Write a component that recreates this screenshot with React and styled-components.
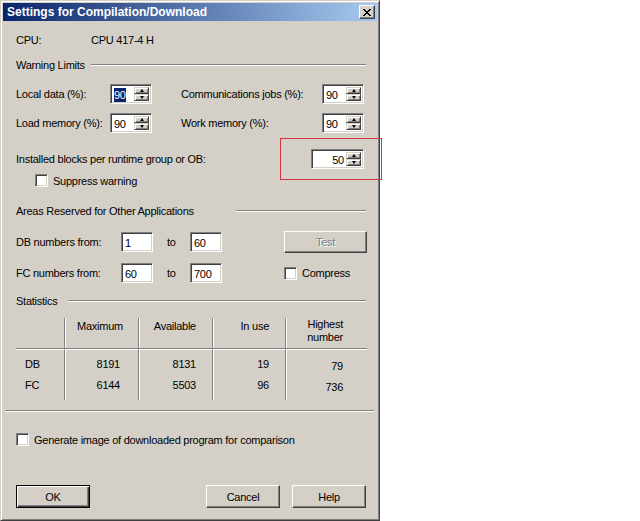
import React from 'react';
import styled, { createGlobalStyle } from 'styled-components';

const GlobalStyle = createGlobalStyle`
   body {
      margin: 0;
      background: #fff;
   }
`;

const Page = styled.div`
   position: relative;
   width: 640px;
   height: 521px;
   font-family: "Liberation Sans", Arial, sans-serif;
   font-size: 11px;
   letter-spacing: -0.25px;
   color: #000;
`;

const Window = styled.div`
   width: 380px;
   height: 521px;
   box-sizing: border-box;
   padding: 2px;
   background: #d4d0c8;
   border: 1px solid;
   border-color: #d4d0c8 #404040 #404040 #d4d0c8;
   box-shadow: inset 1px 1px #fff, inset -1px -1px #808080;
   display: flex;
   flex-direction: column;
`;

const TitleBar = styled.div`
   height: 18px;
   display: flex;
   align-items: center;
   padding: 0 2px 0 4px;
   background: linear-gradient(to right, #0a246a, #a6caf0);
`;

const Title = styled.span`
   color: #fff;
   font-weight: bold;
   font-size: 12px;
   letter-spacing: 0;
`;

const CloseButton = styled.div`
   margin-left: auto;
   width: 16px;
   height: 14px;
   box-sizing: border-box;
   display: flex;
   align-items: center;
   justify-content: center;
   background: #d4d0c8;
   border: 1px solid;
   border-color: #fff #404040 #404040 #fff;
   box-shadow: inset -1px -1px #808080;
`;

const Body = styled.div`
   flex: 1;
   padding: 0 10px 0 13px;
   line-height: 14px;
`;

const Row = styled.div`
   display: grid;
   grid-template-columns: ${p => p.$cols};
   align-items: center;
   margin-top: ${p => p.$mt}px;
   height: ${p => p.$h || 14}px;
   white-space: nowrap;
`;

const GroupTitle = styled.div`
   display: grid;
   grid-template-columns: ${p => p.$start}px 1fr;
   align-items: center;
   margin-top: ${p => p.$mt}px;
   margin-right: 1px;
   height: 14px;
`;

const Etch = styled.div`
   height: 1px;
   background: #808080;
   border-bottom: 1px solid #fff;
`;

const Separator = styled(Etch)`
   margin: 10px -7px 0 -11px;
`;

const Sunken = styled.div`
   box-sizing: border-box;
   height: 20px;
   width: ${p => p.$w}px;
   background: #fff;
   border: 1px solid;
   border-color: #808080 #fff #fff #808080;
   box-shadow: inset 1px 1px #404040, inset -1px -1px #d4d0c8;
   display: flex;
   padding: 2px;
   justify-self: ${p => p.$justify || 'start'};
`;

const FieldText = styled.div`
   flex: 1;
   line-height: 16px;
   padding: 0 2px 0 1px;
   text-align: ${p => p.$align || 'left'};
`;

const Selected = styled.span`
   background: #0a246a;
   color: #fff;
   padding: 1px 0;
`;

const SpinButtons = styled.div`
   width: 15px;
   display: flex;
   flex-direction: column;
`;

const SpinButton = styled.div`
   flex: 1;
   box-sizing: border-box;
   display: flex;
   align-items: center;
   justify-content: center;
   background: #d4d0c8;
   border: 1px solid;
   border-color: #d4d0c8 #404040 #404040 #d4d0c8;
   box-shadow: inset 1px 1px #fff, inset -1px -1px #808080;
`;

const Arrow = styled.span`
   width: 0;
   height: 0;
   border-left: 2.5px solid transparent;
   border-right: 2.5px solid transparent;
   ${p => p.$down ? 'border-top: 3px solid #000;' : 'border-bottom: 3px solid #000;'}
`;

const CheckBox = styled.span`
   display: inline-block;
   width: 13px;
   height: 13px;
   box-sizing: border-box;
   background: #fff;
   border: 1px solid;
   border-color: #808080 #fff #fff #808080;
   box-shadow: inset 1px 1px #404040, inset -1px -1px #d4d0c8;
`;

const Check = styled.label`
   display: flex;
   align-items: center;
   gap: 5px;
   margin-top: ${p => p.$mt || 0}px;
   padding-left: ${p => p.$indent || 0}px;
   height: 13px;
   white-space: nowrap;
`;

const Button = styled.div`
   width: ${p => p.$w || 74}px;
   height: ${p => p.$h || 23}px;
   box-sizing: border-box;
   display: flex;
   align-items: center;
   justify-content: center;
   background: #d4d0c8;
   border: 1px solid;
   border-color: ${p => p.$default ? '#000' : '#fff #404040 #404040 #fff'};
   box-shadow: ${p => p.$default
      ? 'inset 1px 1px #fff, inset -1px -1px #404040, inset -2px -2px #808080'
      : 'inset -1px -1px #808080'};
   color: ${p => p.$disabled ? '#808080' : '#000'};
   text-shadow: ${p => p.$disabled ? '1px 1px #fff' : 'none'};
   justify-self: end;
`;

const ButtonBar = styled.div`
   display: flex;
   gap: 12px;
   margin-top: 39px;
   padding-right: 1px;
   & > :first-child {
      margin-right: auto;
   }
`;

const StatGrid = styled.div`
   display: grid;
   grid-template-columns: 48px 74px 74px 73px 1fr;
   grid-template-rows: 31px 25px 26px;
   margin-top: 10px;
`;

const Cell = styled.div`
   box-sizing: border-box;
   padding-top: ${p => p.$pt || 0}px;
   padding-right: ${p => p.$pr || 0}px;
   padding-left: ${p => p.$pl || 0}px;
   text-align: ${p => p.$pl ? 'left' : 'right'};
   line-height: ${p => p.$lh || 14}px;
   border-left: ${p => p.$vl ? '1px solid #808080' : 'none'};
   box-shadow: ${p => p.$vl ? 'inset 1px 0 #fff' : 'none'};
   ${p => p.$head && 'border-bottom: 1px solid #808080;'}
   ${p => p.$first && 'border-top: 1px solid #fff;'}
`;

const Highlight = styled.div`
   position: absolute;
   left: 280px;
   top: 138px;
   width: 102px;
   height: 42px;
   box-sizing: border-box;
   border: 1px solid #d9333f;
   pointer-events: none;
`;

const Spin = ({ value, width = 42, align, selected, justify }) => (
   <Sunken $w={width} $justify={justify}>
      <FieldText $align={align}>{selected ? <Selected>{value}</Selected> : value}</FieldText>
      <SpinButtons>
         <SpinButton><Arrow /></SpinButton>
         <SpinButton><Arrow $down /></SpinButton>
      </SpinButtons>
   </Sunken>
);

const Field = ({ value }) => (
   <Sunken $w={32}>
      <FieldText>{value}</FieldText>
   </Sunken>
);

const stats = [
   { name: 'DB', max: 8191, avail: 8131, used: 19, high: 79, pt: 7 },
   { name: 'FC', max: 6144, avail: 5503, used: 96, high: 736, pt: 4 },
];

const App = () => {
   return (
      <Page>
         <GlobalStyle />
         <Window>
            <TitleBar>
               <Title>Settings for Compilation/Download</Title>
               <CloseButton>
                  <svg width="8" height="7" viewBox="0 0 8 7" shapeRendering="crispEdges">
                     <path d="M0 0h2v1h-2zM6 0h2v1h-2zM1 1h2v1h-2zM5 1h2v1h-2zM2 2h4v1h-4zM3 3h2v1h-2zM2 4h4v1h-4zM1 5h2v1h-2zM5 5h2v1h-2zM0 6h2v1h-2zM6 6h2v1h-2z" fill="#000" />
                  </svg>
               </CloseButton>
            </TitleBar>
            <Body>
               <Row $cols="75px auto" $mt={12}>
                  <span>CPU:</span>
                  <span>CPU 417-4 H</span>
               </Row>

               <GroupTitle $start={75} $mt={11}>
                  <span>Warning Limits</span>
                  <Etch />
               </GroupTitle>

               <Row $cols="94px 42px 29px 141px 42px" $mt={12} $h={20}>
                  <span>Local data (%):</span>
                  <Spin value="90" selected />
                  <span />
                  <span>Communications jobs (%):</span>
                  <Spin value="90" />
               </Row>
               <Row $cols="94px 42px 29px 141px 42px" $mt={9} $h={20}>
                  <span>Load memory (%):</span>
                  <Spin value="90" />
                  <span />
                  <span>Work memory (%):</span>
                  <Spin value="90" />
               </Row>

               <Row $cols="1fr 56px" $mt={16} $h={20}>
                  <span>Installed blocks per runtime group or OB:</span>
                  <Spin value="50" width={53} align="right" />
               </Row>
               <Check $mt={5} $indent={19}>
                  <CheckBox />
                  Suppress warning
               </Check>

               <GroupTitle $start={220} $mt={17}>
                  <span>Areas Reserved for Other Applications</span>
                  <Etch />
               </GroupTitle>

               <Row $cols="105px 32px 37px 32px 1fr" $mt={13} $h={20}>
                  <span>DB numbers from:</span>
                  <Field value="1" />
                  <span style={{ paddingLeft: 14 }}>to</span>
                  <Field value="60" />
                  <Button $w={83} $h={22} $disabled>Test</Button>
               </Row>
               <Row $cols="105px 32px 37px 32px 62px 1fr" $mt={12} $h={20}>
                  <span>FC numbers from:</span>
                  <Field value="60" />
                  <span style={{ paddingLeft: 14 }}>to</span>
                  <Field value="700" />
                  <span />
                  <Check>
                     <CheckBox />
                     Compress
                  </Check>
               </Row>

               <GroupTitle $start={52} $mt={11}>
                  <span>Statistics</span>
                  <Etch />
               </GroupTitle>

               <StatGrid>
                  <Cell $head />
                  <Cell $head $vl $pt={1} $pr={15}>Maximum</Cell>
                  <Cell $head $vl $pt={1} $pr={16}>Available</Cell>
                  <Cell $head $vl $pt={1} $pr={16}>In use</Cell>
                  <Cell $head $vl $pt={0} $pr={24} $lh={13}>Highest<br />number</Cell>
                  {stats.map((s, i) => (
                     <React.Fragment key={s.name}>
                        <Cell $first={i === 0} $pt={s.pt} $pl={9}>{s.name}</Cell>
                        <Cell $first={i === 0} $vl $pt={s.pt} $pr={18}>{s.max}</Cell>
                        <Cell $first={i === 0} $vl $pt={s.pt} $pr={16}>{s.avail}</Cell>
                        <Cell $first={i === 0} $vl $pt={s.pt} $pr={16}>{s.used}</Cell>
                        <Cell $first={i === 0} $vl $pt={s.pt + 2} $pr={24}>{s.high}</Cell>
                     </React.Fragment>
                  ))}
               </StatGrid>

               <Separator />

               <Check $mt={21}>
                  <CheckBox />
                  Generate image of downloaded program for comparison
               </Check>

               <ButtonBar>
                  <Button $default>OK</Button>
                  <Button>Cancel</Button>
                  <Button>Help</Button>
               </ButtonBar>
            </Body>
         </Window>
         <Highlight />
      </Page>
   );
};

export default App;
